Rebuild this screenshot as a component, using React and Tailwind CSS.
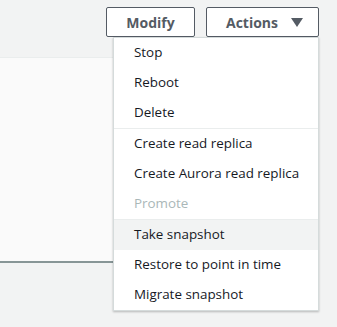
import React from "react";

const items = [
  { label: "Stop" },
  { label: "Reboot" },
  { label: "Delete", divider: true },
  { label: "Create read replica" },
  { label: "Create Aurora read replica" },
  { label: "Promote", disabled: true, divider: true },
  { label: "Take snapshot", active: true },
  { label: "Restore to point in time" },
  { label: "Migrate snapshot" },
];

export default function App() {
  return (
    <div
      className="relative w-[337px] h-[327px] overflow-hidden bg-[#f2f3f3]"
      style={{ fontFamily: "'Open Sans', 'Noto Sans', Arial, sans-serif" }}
    >
      {/* Header buttons */}
      <div className="flex justify-end gap-[11px] pt-[7px] pr-[18px]">
        <button className="w-[89px] h-[30px] border border-[#545b64] rounded-[2px] bg-white text-[14px] font-bold text-[#545b64]">
          Modify
        </button>
        <button className="w-[113px] h-[30px] border border-[#545b64] rounded-[2px] bg-white text-[14px] font-bold text-[#545b64] flex items-center justify-center gap-[13px] pl-[4px]">
          Actions
          <svg width="12" height="9" viewBox="0 0 12 9">
            <path d="M0 0h12L6 9z" fill="#545b64" />
          </svg>
        </button>
      </div>

      {/* Panel behind */}
      <div className="mt-[20px] w-[319px] h-[206px] bg-[#fafafa] border-t border-[#eaeded] border-b-2 border-b-[#879596]" />

      {/* Dropdown menu */}
      <div className="absolute left-[113px] top-[37px] w-[206px] bg-white border border-[#d5dbdb] shadow-[0_1px_2px_rgba(0,0,0,0.25)]">
        {items.map((it) => (
          <div key={it.label}>
            <div
              className={
                "h-[30px] flex items-center pl-[20px] pb-[2px] text-[13.4px] " +
                (it.disabled ? "text-[#aab7b8] " : "text-[#16191f] ") +
                (it.active ? "bg-[#f2f3f3]" : "")
              }
            >
              {it.label}
            </div>
            {it.divider && <div className="h-px bg-[#eaeded]" />}
          </div>
        ))}
      </div>
    </div>
  );
}
